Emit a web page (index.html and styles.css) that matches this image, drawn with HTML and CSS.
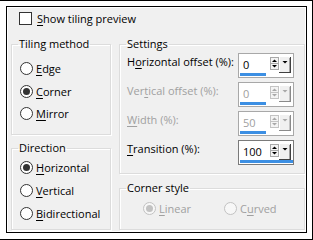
FILE: index.html
```html
<!DOCTYPE html>
<html>
<head>
<meta charset="utf-8">
<link rel="stylesheet" href="styles.css">
</head>
<body>
<div class="screen">
  <div class="dialog">
    <div class="check-row"><span class="checkbox"></span><span><u>S</u>how tiling preview</span></div>
    <div class="columns">
      <div class="col col-left">
        <fieldset class="group tiling">
          <legend>Tiling method</legend>
          <div class="radio-list">
            <div class="radio-row"><span class="radio"></span><span><u>E</u>dge</span></div>
            <div class="radio-row"><span class="radio on"></span><span><u>C</u>orner</span></div>
            <div class="radio-row"><span class="radio"></span><span><u>M</u>irror</span></div>
          </div>
        </fieldset>
        <fieldset class="group direction">
          <legend>Direction</legend>
          <div class="radio-list">
            <div class="radio-row"><span class="radio on"></span><span><u>H</u>orizontal</span></div>
            <div class="radio-row"><span class="radio"></span><span><u>V</u>ertical</span></div>
            <div class="radio-row"><span class="radio"></span><span><u>B</u>idirectional</span></div>
          </div>
        </fieldset>
      </div>
      <div class="col col-right">
        <fieldset class="group settings">
          <legend>Settings</legend>
          <div class="setting-list">
            <div class="setting-row">
              <span class="setting-label">H<u>o</u>rizontal offset (%):</span>
              <div class="spin">
                <div class="spin-top"><span class="spin-value">0</span>
                  <svg class="spin-btns" width="21" height="16" viewBox="0 0 21 16"><rect x="0.5" y="0.5" width="8" height="12" fill="#f4f4f4" stroke="#a9a9a9"/><line x1="1" y1="6.5" x2="8" y2="6.5" stroke="#a9a9a9"/><polygon points="2,5 7,5 4.5,2.5" fill="#000"/><polygon points="2,8 7,8 4.5,10.5" fill="#000"/><rect x="9" y="0" width="12" height="16" fill="#f0f0f0"/><line x1="9.5" y1="0" x2="9.5" y2="15" stroke="#fff"/><line x1="20.5" y1="0" x2="20.5" y2="16" stroke="#404040"/><line x1="9" y1="15.5" x2="21" y2="15.5" stroke="#404040"/><line x1="19.5" y1="1" x2="19.5" y2="15" stroke="#a0a0a0"/><polygon points="12.5,4 17.5,4 15,6.5" fill="#000"/></svg>
                </div>
                <div class="spin-bar" style="width:26px"></div>
              </div>
            </div>
            <div class="setting-row disabled">
              <span class="setting-label">Ver<u>t</u>ical offset (%):</span>
              <div class="spin">
                <div class="spin-top"><span class="spin-value">0</span>
                  <svg class="spin-btns" width="21" height="16" viewBox="0 0 21 16"><rect x="0.5" y="0.5" width="8" height="12" fill="#f4f4f4" stroke="#c4c4c4"/><line x1="1" y1="6.5" x2="8" y2="6.5" stroke="#c4c4c4"/><polygon points="2,5 7,5 4.5,2.5" fill="#a8a8a8"/><polygon points="2,8 7,8 4.5,10.5" fill="#a8a8a8"/><rect x="9" y="0" width="12" height="16" fill="#f0f0f0"/><line x1="9.5" y1="0" x2="9.5" y2="15" stroke="#fff"/><line x1="20.5" y1="0" x2="20.5" y2="16" stroke="#8a8a8a"/><line x1="9" y1="15.5" x2="21" y2="15.5" stroke="#8a8a8a"/><line x1="19.5" y1="1" x2="19.5" y2="15" stroke="#c4c4c4"/><polygon points="12.5,4 17.5,4 15,6.5" fill="#a8a8a8"/></svg>
                </div>
                <div class="spin-bar" style="width:26px"></div>
              </div>
            </div>
            <div class="setting-row disabled">
              <span class="setting-label"><u>W</u>idth (%):</span>
              <div class="spin">
                <div class="spin-top"><span class="spin-value">50</span>
                  <svg class="spin-btns" width="21" height="16" viewBox="0 0 21 16"><rect x="0.5" y="0.5" width="8" height="12" fill="#f4f4f4" stroke="#c4c4c4"/><line x1="1" y1="6.5" x2="8" y2="6.5" stroke="#c4c4c4"/><polygon points="2,5 7,5 4.5,2.5" fill="#a8a8a8"/><polygon points="2,8 7,8 4.5,10.5" fill="#a8a8a8"/><rect x="9" y="0" width="12" height="16" fill="#f0f0f0"/><line x1="9.5" y1="0" x2="9.5" y2="15" stroke="#fff"/><line x1="20.5" y1="0" x2="20.5" y2="16" stroke="#8a8a8a"/><line x1="9" y1="15.5" x2="21" y2="15.5" stroke="#8a8a8a"/><line x1="19.5" y1="1" x2="19.5" y2="15" stroke="#c4c4c4"/><polygon points="12.5,4 17.5,4 15,6.5" fill="#a8a8a8"/></svg>
                </div>
                <div class="spin-bar" style="width:26px"></div>
              </div>
            </div>
            <div class="setting-row">
              <span class="setting-label"><u>T</u>ransition (%):</span>
              <div class="spin focus">
                <div class="spin-top"><span class="spin-value">100</span>
                  <svg class="spin-btns" width="21" height="16" viewBox="0 0 21 16"><rect x="0.5" y="0.5" width="8" height="12" fill="#f4f4f4" stroke="#a9a9a9"/><line x1="1" y1="6.5" x2="8" y2="6.5" stroke="#a9a9a9"/><polygon points="2,5 7,5 4.5,2.5" fill="#000"/><polygon points="2,8 7,8 4.5,10.5" fill="#000"/><rect x="9" y="0" width="12" height="16" fill="#f0f0f0"/><line x1="9.5" y1="0" x2="9.5" y2="15" stroke="#fff"/><line x1="20.5" y1="0" x2="20.5" y2="16" stroke="#404040"/><line x1="9" y1="15.5" x2="21" y2="15.5" stroke="#404040"/><line x1="19.5" y1="1" x2="19.5" y2="15" stroke="#a0a0a0"/><polygon points="12.5,4 17.5,4 15,6.5" fill="#000"/></svg>
                </div>
                <div class="spin-bar" style="width:53px"></div>
              </div>
            </div>
          </div>
        </fieldset>
        <fieldset class="group corner">
          <legend>Corner style</legend>
          <div class="corner-row">
            <div class="radio-row disabled linear"><span class="radio on"></span><span><u>L</u>inear</span></div>
            <div class="radio-row disabled"><span class="radio"></span><span>C<u>u</u>rved</span></div>
          </div>
        </fieldset>
      </div>
    </div>
  </div>
</div>
</body>
</html>
```
FILE: styles.css
```css
html, body {
  margin: 0;
  padding: 0;
}
body {
  width: 313px;
  height: 240px;
  background: #fff;
  font-family: "Open Sans", "Noto Sans", sans-serif;
  font-size: 11px;
  color: #000;
  overflow: hidden;
}
u {
  text-decoration: underline;
  text-underline-offset: 2px;
  text-decoration-thickness: 1px;
}
.screen {
  box-sizing: border-box;
  width: 313px;
  height: 240px;
  border-top: 1px solid #000;
  border-right: 1px solid #000;
  border-bottom: 1px solid #000;
  padding: 5px 5px 6px 6px;
}
.dialog {
  box-sizing: border-box;
  height: 100%;
  border: 1px solid #000;
  background: #f0f0f0;
  box-shadow: inset 0 0 0 1px #fff;
  padding: 5px 1px 2px 4px;
  display: flex;
  flex-direction: column;
}
.check-row {
  display: flex;
  align-items: center;
  gap: 5px;
  height: 13px;
  padding-left: 8px;
  line-height: 13px;
}
.checkbox {
  box-sizing: border-box;
  width: 13px;
  height: 13px;
  border: 1px solid #333;
  background: #fff;
  flex: none;
}
.columns {
  display: flex;
  gap: 8px;
  margin-top: 11px;
}
.col {
  display: flex;
  flex-direction: column;
}
.col-left { width: 100px; gap: 5px; }
.col-right { width: 186px; gap: 6px; }
.group {
  box-sizing: border-box;
  margin: 0;
  padding: 0;
  min-width: 0;
  border: 1px solid #dcdcdc;
  box-shadow: inset 1px 1px 0 #fff, 1px 1px 0 #fff;
}
.group legend {
  margin-left: 6px;
  padding: 0 1px;
  line-height: 16px;
}
.tiling { height: 99px; }
.direction { height: 90px; }
.settings { height: 138px; }
.corner { height: 50px; }
.radio-list {
  display: flex;
  flex-direction: column;
  padding-left: 8px;
}
.tiling .radio-list { padding-top: 10px; gap: 9.5px; }
.direction .radio-list { padding-top: 4.5px; gap: 10px; }
.radio-row {
  display: flex;
  align-items: center;
  gap: 3px;
  height: 13px;
  line-height: 13px;
}
.radio {
  box-sizing: border-box;
  width: 13px;
  height: 13px;
  border: 1px solid #333;
  border-radius: 50%;
  background: #fff;
  flex: none;
  display: grid;
  place-items: center;
}
.radio.on::after {
  content: "";
  width: 7px;
  height: 7px;
  border-radius: 50%;
  background: #333;
}
.disabled { color: #a0a0a0; }
.radio-row.disabled .radio { border-color: #c2c2c2; background: #f7f7f7; }
.radio-row.disabled .radio.on::after { background: #c2c2c2; }
.setting-list {
  display: flex;
  flex-direction: column;
  gap: 4px;
  padding: 1px 10px 0 7px;
}
.setting-row {
  display: flex;
  align-items: flex-start;
  justify-content: space-between;
}
.setting-label {
  line-height: 16px;
  margin-top: 1px;
  white-space: nowrap;
}
.spin {
  box-sizing: border-box;
  width: 56px;
  height: 25px;
  border: 1px solid #a8a8a8;
  background: #fff;
  display: flex;
  flex-direction: column;
}
.spin.focus { border-color: #7a7a7a; }
.spin-top {
  display: flex;
  align-items: flex-start;
  height: 19px;
}
.spin-value {
  flex: 1;
  padding-left: 4px;
  line-height: 19px;
  margin-top: 1px;
}
.setting-row .spin-value { color: #000; }
.setting-row.disabled .spin-value { color: #a0a0a0; }
.spin-btns {
  display: block;
  margin-top: 3px;
  margin-right: 2px;
  flex: none;
}
.spin-bar {
  height: 3px;
  margin-left: 1px;
  background: #3c8fe3;
}
.corner-row {
  display: flex;
  align-items: center;
  padding: 5.5px 0 0 23px;
}
.corner-row .linear { width: 81px; }
```
